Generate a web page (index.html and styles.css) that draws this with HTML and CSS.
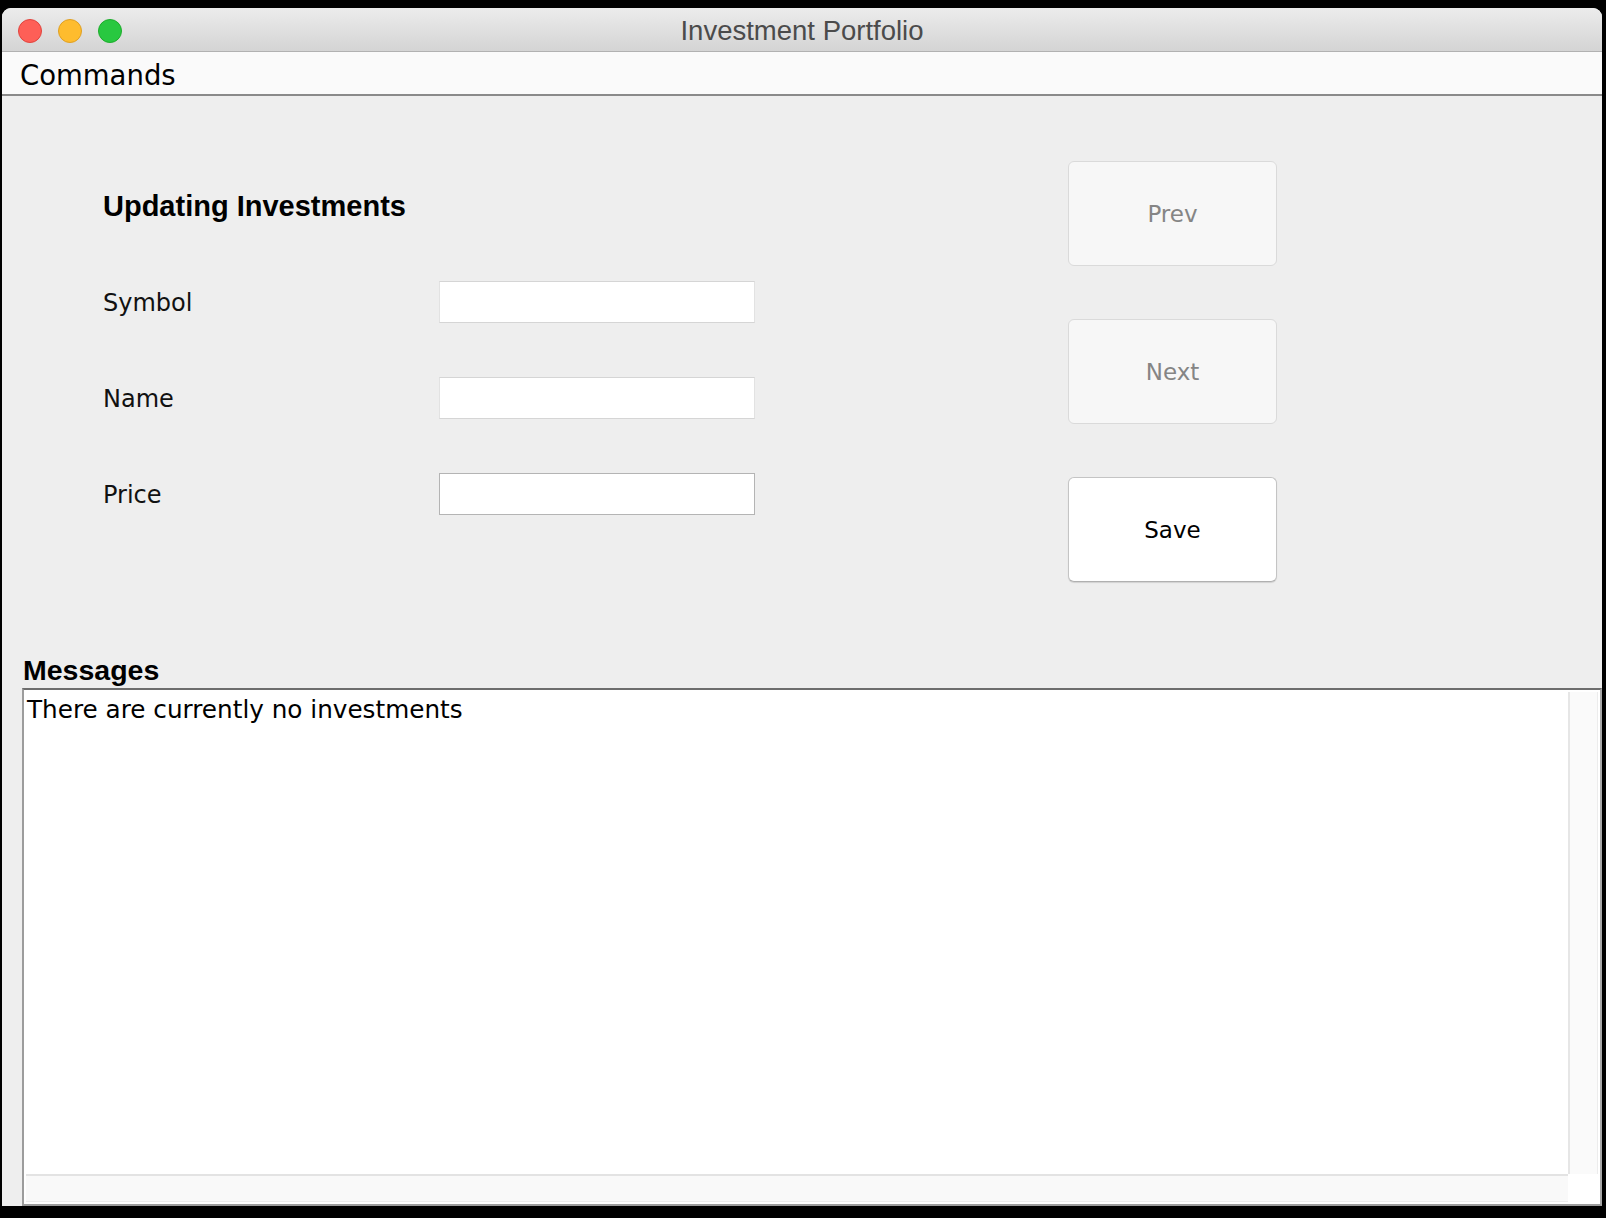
FILE: index.html
```html
<!DOCTYPE html>
<html lang="en">
<head>
<meta charset="utf-8">
<title>Investment Portfolio</title>
<link rel="stylesheet" href="styles.css">
</head>
<body>
<div class="window">
  <div class="titlebar">
    <div class="lights">
      <span class="light red"></span>
      <span class="light yellow"></span>
      <span class="light green"></span>
    </div>
    <div class="title">Investment Portfolio</div>
    <div></div>
  </div>
  <div class="menubar"><span class="menu">Commands</span></div>
  <div class="main">
    <div class="top">
      <div class="form">
        <h1 class="heading">Updating Investments</h1>
        <div class="grid">
          <label class="label">Symbol</label>
          <input class="field" type="text">
          <label class="label">Name</label>
          <input class="field" type="text">
          <label class="label">Price</label>
          <input class="field field-dark" type="text">
        </div>
      </div>
      <div class="buttons">
        <button class="btn btn-disabled">Prev</button>
        <button class="btn btn-disabled">Next</button>
        <button class="btn btn-save">Save</button>
      </div>
    </div>
    <div class="messages">
      <div class="msg-label">Messages</div>
      <div class="textarea">
        <div class="pane">
          <div class="content">There are currently no investments</div>
          <div class="vscroll"></div>
          <div class="hscroll"></div>
          <div class="corner"></div>
        </div>
      </div>
    </div>
  </div>
</div>
</body>
</html>
```

FILE: styles.css
```css
* { box-sizing: border-box; }
html, body { margin: 0; padding: 0; }
body {
  background: #000;
  width: 1606px;
  height: 1218px;
  overflow: hidden;
}
.window {
  margin: 8px 0 0 2px;
  width: 1600px;
  height: 1198px;
  background: #eeeeee;
  border-radius: 9px 9px 0 0;
  overflow: hidden;
  display: flex;
  flex-direction: column;
}
.titlebar {
  height: 44px;
  flex: none;
  background: linear-gradient(#ececec, #d4d4d4);
  border-bottom: 1px solid #b1b1b1;
  display: grid;
  grid-template-columns: 1fr auto 1fr;
  align-items: center;
}
.lights {
  display: flex;
  gap: 16px;
  padding-left: 16px;
  padding-top: 1px;
}
.light {
  width: 24px;
  height: 24px;
  border-radius: 50%;
  display: block;
}
.red { background: #fe5f57; border: 1px solid #e1443e; }
.yellow { background: #febc2e; border: 1px solid #dfa023; }
.green { background: #28c840; border: 1px solid #1dad2b; }
.title {
  font-family: "Liberation Sans", Arial, sans-serif;
  font-size: 27.5px;
  color: #4b4b4b;
  line-height: 43px;
  padding-top: 1px;
}
.menubar {
  height: 44px;
  flex: none;
  background: #fafafa;
  border-bottom: 2px solid #8a8a8a;
  padding: 5px 0 0 18px;
}
.menu {
  font-family: "DejaVu Sans", sans-serif;
  font-size: 27.5px;
  line-height: 36px;
  color: #000;
}
.main {
  flex: 1;
  display: flex;
  flex-direction: column;
  min-height: 0;
}
.top {
  display: flex;
  padding-left: 101px;
  flex: none;
}
.form {
  width: 965px;
  padding-top: 93px;
}
.heading {
  margin: 0 0 58px 0;
  font-family: "Liberation Sans", Arial, sans-serif;
  font-weight: bold;
  font-size: 29px;
  line-height: 34px;
  color: #000;
}
.grid {
  display: grid;
  grid-template-columns: 336px 316px;
  grid-auto-rows: 42px;
  row-gap: 54px;
  align-items: center;
}
.label {
  font-family: "DejaVu Sans", sans-serif;
  font-size: 24px;
  line-height: 30px;
  padding-top: 2px;
  color: #111;
}
.field {
  width: 316px;
  height: 42px;
  margin: 0;
  padding: 0 6px;
  background: #fff;
  border: 1px solid #d5d5d5;
  border-left-color: #e2e2e2;
  border-right-color: #e2e2e2;
  border-radius: 0;
  outline: none;
  font-family: "DejaVu Sans", sans-serif;
  font-size: 22px;
}
.field-dark {
  border-color: #b4b4b4;
}
.buttons {
  padding-top: 65px;
  display: flex;
  flex-direction: column;
  gap: 53px;
}
.btn {
  width: 209px;
  height: 105px;
  margin: 0;
  padding: 0;
  border-radius: 6px;
  font-family: "DejaVu Sans", sans-serif;
  font-size: 23px;
  display: flex;
  align-items: center;
  justify-content: center;
}
.btn-disabled {
  background: #f7f7f7;
  border: 1px solid #dadada;
  color: #858585;
}
.btn-save {
  background: #fff;
  border: 1px solid #c4c4c4;
  border-bottom-color: #b0b0b0;
  box-shadow: 0 1px 1px rgba(0, 0, 0, 0.12);
  color: #000;
}
.messages {
  flex: 1;
  display: flex;
  flex-direction: column;
  padding-left: 20px;
  margin-top: 74px;
  min-height: 0;
}
.msg-label {
  font-family: "Liberation Sans", Arial, sans-serif;
  font-weight: bold;
  font-size: 28.5px;
  line-height: 29px;
  color: #000;
  margin-bottom: 3px;
  padding-left: 1px;
}
.textarea {
  flex: 1;
  background: #fff;
  border: 2px solid #9c9c9c;
  border-top-color: #6d6d6d;
  border-right-color: #a8a8a8;
  padding: 2px;
  min-height: 0;
  display: flex;
}
.pane {
  flex: 1;
  display: grid;
  grid-template-columns: 1fr 30px;
  grid-template-rows: 1fr 28px;
}
.content {
  margin-left: 1px;
  padding-top: 3px;
  font-family: "DejaVu Sans", sans-serif;
  font-size: 24.7px;
  line-height: 30px;
  color: #000;
  white-space: nowrap;
}
.vscroll {
  background: #fafafa;
  border-left: 2px solid #e6e6e6;
  border-right: 1px solid #ececec;
}
.hscroll {
  background: #f9f9f9;
  border-top: 2px solid #e3e3e3;
  border-bottom: 1px solid #ececec;
}
.corner {
  background: #fff;
}
```
